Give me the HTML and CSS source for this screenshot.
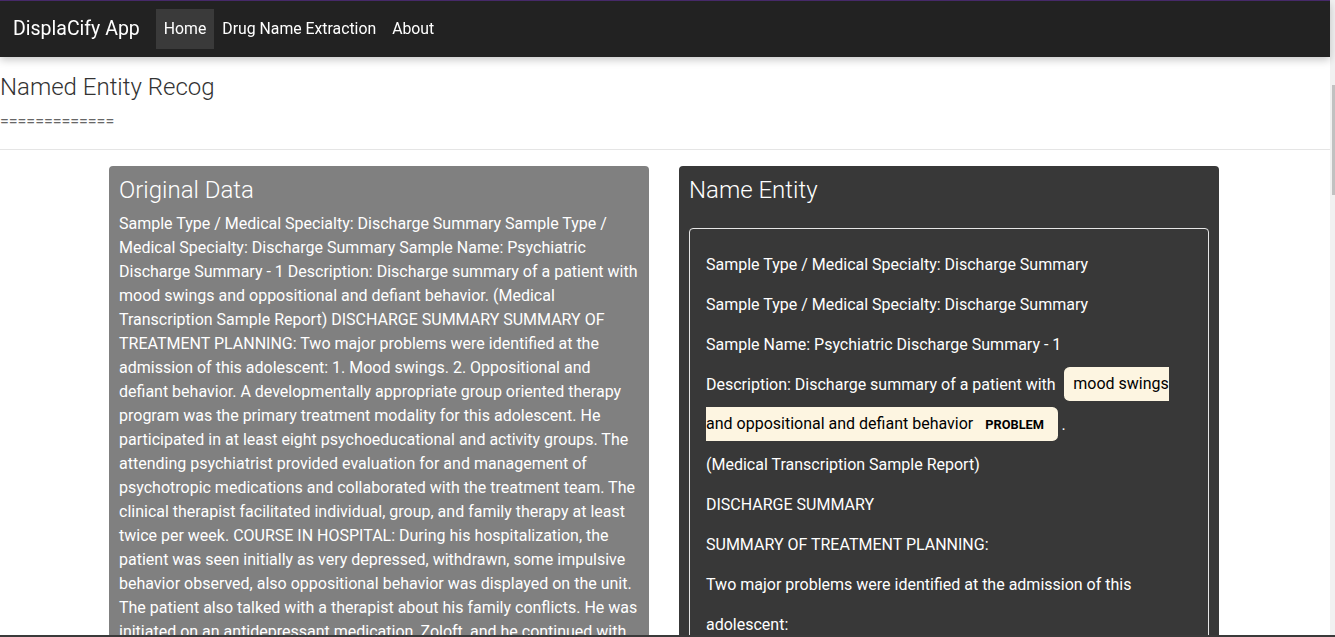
FILE: index.html
```html
<!DOCTYPE html>
<html lang="en">
<head>
<meta charset="utf-8">
<title>DisplaCify App</title>
<link rel="stylesheet" href="styles.css">
</head>
<body>
<div class="page">
  <div class="topline"></div>
  <nav class="navbar">
    <a class="brand" href="#">DisplaCify App</a>
    <ul class="nav">
      <li><a class="nav-link active" href="#">Home</a></li>
      <li><a class="nav-link" href="#">Drug Name Extraction</a></li>
      <li><a class="nav-link" href="#">About</a></li>
    </ul>
  </nav>
  <header class="page-head">
    <h3 class="page-title">Named Entity Recog</h3>
    <p class="rule-text">=============</p>
  </header>
  <hr class="divider">
  <main class="cards">
    <section class="card card-gray">
      <h3 class="card-title">Original Data</h3>
      <p class="card-text">Sample Type / Medical Specialty: Discharge Summary Sample Type / Medical Specialty: Discharge Summary Sample Name: Psychiatric Discharge Summary - 1 Description: Discharge summary of a patient with mood swings and oppositional and defiant behavior. (Medical Transcription Sample Report) DISCHARGE SUMMARY SUMMARY OF TREATMENT PLANNING: Two major problems were identified at the admission of this adolescent: 1. Mood swings. 2. Oppositional and defiant behavior. A developmentally appropriate group oriented therapy program was the primary treatment modality for this adolescent. He participated in at least eight psychoeducational and activity groups. The attending psychiatrist provided evaluation for and management of psychotropic medications and collaborated with the treatment team. The clinical therapist facilitated individual, group, and family therapy at least twice per week. COURSE IN HOSPITAL: During his hospitalization, the patient was seen initially as very depressed, withdrawn, some impulsive behavior observed, also oppositional behavior was displayed on the unit. The patient also talked with a therapist about his family conflicts. He was initiated on an antidepressant medication, Zoloft, and he continued with the medication throughout his stay on the unit.</p>
    </section>
    <section class="card card-dark">
      <h3 class="card-title">Name Entity</h3>
      <div class="entity-box">
        <div class="entities">Sample Type / Medical Specialty: Discharge Summary<br>Sample Type / Medical Specialty: Discharge Summary<br>Sample Name: Psychiatric Discharge Summary - 1<br>Description: Discharge summary of a patient with <mark class="entity">mood swings and oppositional and defiant behavior <span class="entity-label">PROBLEM</span> </mark> .<br>(Medical Transcription Sample Report)<br>DISCHARGE SUMMARY<br>SUMMARY OF TREATMENT PLANNING:<br>Two major problems were identified at the admission of this adolescent:<br>1. Mood swings.<br>2. Oppositional and defiant behavior.</div>
      </div>
    </section>
  </main>
</div>
<div class="scrollbar"><div class="scroll-thumb"></div></div>
<div class="bottomline"></div>
</body>
</html>
```
FILE: styles.css
```css
html, body {
  margin: 0;
  padding: 0;
  height: 637px;
  overflow: hidden;
  background: #fff;
}
body {
  font-family: Roboto, "Liberation Sans", sans-serif;
  font-size: 16px;
  line-height: 1.5;
  color: #212529;
}
.page {
  width: 1330px;
}
.topline {
  height: 1px;
  background: #4a2b6e;
}
.navbar {
  height: 56px;
  background: #222222;
  display: flex;
  align-items: center;
  padding: 0 13px;
  box-shadow: 0 3px 8px rgba(0, 0, 0, 0.22);
  position: relative;
  z-index: 1;
}
.brand {
  color: #fff;
  font-size: 19.5px;
  text-decoration: none;
  margin-right: 16px;
  line-height: 30px;
}
.nav {
  list-style: none;
  margin: 0;
  padding: 0;
  display: flex;
}
.nav-link {
  display: block;
  color: #fff;
  text-decoration: none;
  font-size: 15.8px;
  padding: 8px 8px;
  line-height: 24px;
}
.nav-link.active {
  background: #3a3a3a;
}
.page-head {
  padding: 0;
}
.page-title {
  margin: 16px 0 8px;
  font-size: 24px;
  font-weight: 300;
  line-height: 1.2;
  color: #333;
}
.rule-text {
  margin: 0;
  color: #666;
  line-height: 24px;
}
.divider {
  margin: 15px 0 16px;
  border: 0;
  border-top: 1px solid #e5e5e5;
}
.cards {
  display: grid;
  grid-template-columns: 540px 540px;
  column-gap: 30px;
  margin-left: 109px;
}
.card {
  border-radius: 4px;
  padding: 10px 10px 10px;
  color: #fff;
}
.card-gray {
  background: #808080;
}
.card-dark {
  background: #383838;
}
.card-title {
  margin: 0 0 7px;
  font-size: 24px;
  font-weight: 300;
  line-height: 1.2;
}
.card-text {
  margin: 0;
  line-height: 24px;
}
.entity-box {
  margin-top: 23px;
  border: 1px solid #e6e6e6;
  border-radius: 4px;
  padding: 16px;
}
.entities {
  line-height: 2.5;
  direction: ltr;
}
.entity {
  background: #fdf5e1;
  color: #000;
  padding: 0.45em 0.6em;
  margin: 0 0.25em;
  line-height: 1;
  border-radius: 0.35em;
}
.entity-label {
  font-size: 0.8em;
  font-weight: bold;
  line-height: 1;
  border-radius: 0.35em;
  vertical-align: middle;
  margin-left: 0.5rem;
}
.scrollbar {
  position: fixed;
  top: 0;
  right: 0;
  width: 5px;
  height: 637px;
  background: #f1f1f1;
}
.scroll-thumb {
  position: absolute;
  top: 85px;
  left: 2px;
  width: 3px;
  height: 110px;
  background: #c1c1c1;
}
.bottomline {
  position: fixed;
  left: 0;
  bottom: 0;
  width: 100%;
  height: 2px;
  background: #3a3a3a;
}
```
